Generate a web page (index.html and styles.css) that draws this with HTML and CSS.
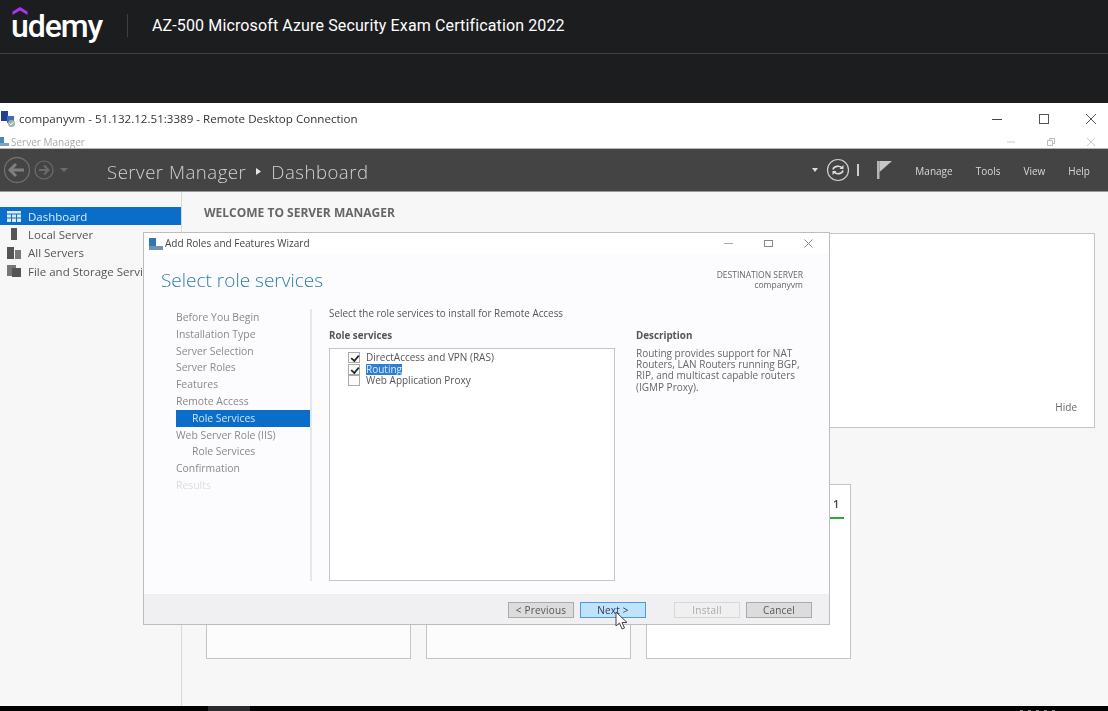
FILE: index.html
```html
<!DOCTYPE html>
<html lang="en">
<head>
<meta charset="utf-8">
<title>AZ-500 Microsoft Azure Security Exam Certification 2022</title>
<link rel="stylesheet" href="styles.css">
</head>
<body>
<header class="topbar">
  <div class="logo">
    <svg class="logo-mark" width="16" height="8" viewBox="0 0 16 8"><path d="M8 0 15.500 4.400V8L8 3.600.5 8V4.400z" fill="#a435f0"/></svg>
    <span class="logo-word">udemy</span>
  </div>
  <span class="topbar-sep"></span>
  <span class="course-title">AZ-500 Microsoft Azure Security Exam Certification 2022</span>
</header>
<div class="band"></div>
<section class="rdp">
  <div class="rdp-title">
    <svg class="rdp-icon" width="15" height="18" viewBox="0 0 15 18"><rect x="0" y="1" width="7" height="10" fill="#1f3f96"/><rect x="6" y="6" width="7" height="7" fill="#3e6cc4"/><circle cx="10.500" cy="13.500" r="3.500" fill="#9fb49f"/><path d="M8.500 13.500 10 15l2.500-3" fill="none" stroke="#fff"/></svg>
    <span class="rdp-text">companyvm - 51.132.12.51:3389 - Remote Desktop Connection</span>
    <div class="win-controls">
      <svg width="12" height="12" viewBox="0 0 12 12"><path d="M1 6.500h10" stroke="#444" stroke-width="1"/></svg>
      <svg width="12" height="12" viewBox="0 0 12 12"><rect x="1.500" y="1.500" width="9" height="9" fill="none" stroke="#555"/></svg>
      <svg width="12" height="12" viewBox="0 0 12 12"><path d="M1 1l10 10M11 1 1 11" stroke="#555"/></svg>
    </div>
  </div>
  <div class="sm-title">
    <svg width="9" height="9" viewBox="0 0 9 9"><rect width="4" height="6" fill="#4a87b8"/><rect y="6" width="9" height="3" fill="#7fa3c0"/></svg>
    <span class="sm-title-text">Server Manager</span>
    <div class="sm-controls">
      <svg width="8" height="8" viewBox="0 0 8 8"><path d="M0 4h8" stroke="#ccc"/></svg>
      <svg width="8" height="8" viewBox="0 0 8 8"><path d="M.5 2.500h5v5h-5zM2.500 2.500v-2h5v5h-2" fill="none" stroke="#bbb"/></svg>
      <svg width="8" height="8" viewBox="0 0 8 8"><path d="M0 0l8 8M8 0 0 8" stroke="#ccc"/></svg>
    </div>
  </div>
  <div class="sm-bar">
    <div class="nav-arrows">
      <svg width="28" height="28" viewBox="0 0 28 28"><circle cx="14" cy="14" r="12.500" fill="none" stroke="#707070" stroke-width="1.300"/><path d="M21 14H8M13 8l-6 6 6 6" fill="none" stroke="#7e7e7e" stroke-width="3"/></svg>
      <svg width="20" height="20" viewBox="0 0 20 20"><circle cx="10" cy="10" r="9" fill="none" stroke="#6c6c6c" stroke-width="1.200"/><path d="M5 10h9M10 5.500 14.500 10 10 14.500" fill="none" stroke="#6c6c6c" stroke-width="2"/></svg>
      <svg width="8" height="4" viewBox="0 0 8 4"><path d="M0 0h8L4 4z" fill="#6c6c6c"/></svg>
    </div>
    <div class="crumbs">
      <span>Server Manager</span>
      <svg width="5" height="7" viewBox="0 0 5 7"><path d="M0 0 5 3.500 0 7z" fill="#e8e8e8"/></svg>
      <span>Dashboard</span>
    </div>
    <div class="sm-tools">
      <svg width="6" height="4" viewBox="0 0 6 4"><path d="M0 0h6L3 4z" fill="#ddd"/></svg>
      <svg class="refresh" width="24" height="24" viewBox="0 0 24 24"><circle cx="12" cy="12" r="10.500" fill="none" stroke="#cfcfcf" stroke-width="1.200"/><path d="M7 11.500a5 4 0 0 1 9-1.500M17 12.500a5 4 0 0 1-9 1.500" fill="none" stroke="#dedede" stroke-width="1.600"/><path d="M17.500 7v4h-4zM6.500 17v-4h4z" fill="#dedede"/></svg>
      <span class="tool-sep"></span>
      <svg class="flag" width="15" height="18" viewBox="0 0 15 18"><path d="M0 0h2.500v18H0z" fill="#b5b5b5"/><path d="M2.500 0H15L2.500 11z" fill="#c8c8c8"/></svg>
      <nav class="sm-menu"><span>Manage</span><span>Tools</span><span>View</span><span>Help</span></nav>
    </div>
  </div>
  <div class="sm-body">
    <aside class="sidebar">
      <div class="side-item active">
        <svg width="14" height="11" viewBox="0 0 14 11"><path d="M0 0h14v11H0z" fill="#dbe9f7"/><path d="M0 3h14M4.500 3v8M9.500 3v8M0 7h14" stroke="#0a6ec8"/></svg>
        <span>Dashboard</span>
      </div>
      <div class="side-item">
        <svg width="14" height="12" viewBox="0 0 14 12"><rect x="4" y="0" width="6" height="12" fill="#555"/></svg>
        <span>Local Server</span>
      </div>
      <div class="side-item">
        <svg width="14" height="12" viewBox="0 0 14 12"><rect x="0" y="0" width="7" height="12" fill="#555"/><rect x="8" y="3" width="6" height="9" fill="#777"/></svg>
        <span>All Servers</span>
      </div>
      <div class="side-item">
        <svg width="14" height="12" viewBox="0 0 14 12"><rect x="0" y="0" width="9" height="11" fill="#777"/><rect x="5" y="3" width="9" height="9" fill="#555"/></svg>
        <span>File and Storage Services</span>
      </div>
    </aside>
    <main class="content">
      <h2 class="welcome-title">WELCOME TO SERVER MANAGER</h2>
      <div class="welcome-panel"><span class="hide-link">Hide</span></div>
      <div class="tiles">
        <div class="tile"></div>
        <div class="tile"></div>
        <div class="tile tile-count"><span class="count">1</span><span class="count-bar"></span></div>
      </div>
    </main>
  </div>
  <div class="dialog">
    <div class="dlg-title">
      <svg width="14" height="12" viewBox="0 0 14 12"><rect width="7" height="8" fill="#2f78b5"/><rect y="8" width="14" height="4" fill="#6f93b3"/></svg>
      <span class="dlg-title-text">Add Roles and Features Wizard</span>
      <div class="dlg-controls">
        <svg width="9" height="9" viewBox="0 0 9 9"><path d="M0 4.500h9" stroke="#aaa"/></svg>
        <svg width="9" height="9" viewBox="0 0 9 9"><rect x=".5" y="1.500" width="8" height="6" fill="none" stroke="#888"/></svg>
        <svg width="9" height="9" viewBox="0 0 9 9"><path d="M.5.500l8 8M8.500.500l-8 8" stroke="#888"/></svg>
      </div>
    </div>
    <div class="dlg-head">
      <h1 class="dlg-heading">Select role services</h1>
      <div class="dest"><div>DESTINATION SERVER</div><div>companyvm</div></div>
    </div>
    <div class="dlg-main">
      <ul class="steps">
        <li>Before You Begin</li>
        <li>Installation Type</li>
        <li>Server Selection</li>
        <li>Server Roles</li>
        <li>Features</li>
        <li>Remote Access</li>
        <li class="sub current">Role Services</li>
        <li>Web Server Role (IIS)</li>
        <li class="sub">Role Services</li>
        <li>Confirmation</li>
        <li class="disabled">Results</li>
      </ul>
      <div class="pane">
        <p class="pane-intro">Select the role services to install for Remote Access</p>
        <div class="pane-cols">
          <div class="roles">
            <div class="sec-label">Role services</div>
            <div class="role-list">
              <div class="role"><span class="check on"></span><span class="role-name">DirectAccess and VPN (RAS)</span></div>
              <div class="role"><span class="check on"></span><span class="role-name selected">Routing</span></div>
              <div class="role"><span class="check"></span><span class="role-name">Web Application Proxy</span></div>
            </div>
          </div>
          <div class="desc">
            <div class="sec-label">Description</div>
            <p class="desc-text">Routing provides support for NAT Routers, LAN Routers running BGP, RIP, and multicast capable routers (IGMP Proxy).</p>
          </div>
        </div>
      </div>
    </div>
    <div class="dlg-foot">
      <span class="btn">&lt; Previous</span>
      <span class="btn hover">Next &gt;<svg class="cursor" width="13" height="19" viewBox="0 0 13 19"><path d="M1 1v14l3.500-3 2.500 6 2.500-1-2.500-5.500H12z" fill="#fff" stroke="#444"/></svg></span>
      <span class="btn off">Install</span>
      <span class="btn">Cancel</span>
    </div>
  </div>
</section>
<div class="bottom"><span class="bottom-thumb"></span><span class="bottom-marks"></span></div>
</body>
</html>
```
FILE: styles.css
```css
* { box-sizing: border-box; }
html, body { margin: 0; height: 711px; overflow: hidden; background: #1c1d1f; }
body { display: flex; flex-direction: column; font-family: "Open Sans", "Noto Sans", sans-serif; color: #555; }
ul, p, h1, h2 { margin: 0; padding: 0; }

.topbar { height: 54px; flex: none; display: flex; align-items: center; padding: 0 0 2px 12px; border-bottom: 1px solid #3e4143; color: #fff; }
.logo { position: relative; width: 91px; height: 44px; }
.logo-mark { position: absolute; left: 0; top: 3px; }
.logo-word { position: absolute; left: -1px; top: 0; font: 500 32px/44px Roboto, sans-serif; letter-spacing: -1.100px; }
.topbar-sep { width: 1px; height: 23px; background: #3e4143; margin-left: 24px; }
.course-title { margin-left: 24px; font: 400 16px Roboto, sans-serif; letter-spacing: .13px; white-space: nowrap; }
.band { height: 49px; flex: none; background: #1c1d1f; }

.rdp { position: relative; flex: none; height: 603px; background: #fff; display: flex; flex-direction: column; filter: blur(.35px); }
.rdp-title { height: 32px; flex: none; display: flex; align-items: center; padding: 0 11px 0 1px; }
.rdp-icon { margin-right: 3px; }
.rdp-text { font: 11.600px "Open Sans", sans-serif; color: #333; padding-bottom: 1px; }
.win-controls { margin-left: auto; display: flex; gap: 35px; }
.sm-title { height: 13px; flex: none; display: flex; align-items: center; gap: 2px; padding-right: 13px; }
.sm-title-text { font-size: 10px; color: #aaa; }
.sm-controls { margin-left: auto; display: flex; gap: 32px; }
.sm-bar { height: 44px; flex: none; background: #444; border-top: 1px solid #b4b4b4; border-bottom: 1px solid #999; display: flex; align-items: center; padding-left: 3px; }
.nav-arrows { display: flex; align-items: center; gap: 3px; width: 104px; }
.nav-arrows svg:last-child { margin-left: 3px; }
.crumbs { display: flex; align-items: center; gap: 10px; font-size: 18.600px; font-weight: 300; letter-spacing: .5px; color: #d2d2d2; padding-top: 2px; }
.sm-tools { margin-left: auto; display: flex; align-items: center; padding-right: 18px; }
.refresh { margin-left: 8px; }
.tool-sep { width: 2px; height: 12px; background: #ccc; margin-left: 7px; }
.flag { margin-left: 18px; }
.sm-menu { display: flex; gap: 23px; margin-left: 23px; padding-top: 1px; font-size: 10px; color: #d8d8d8; }

.sm-body { flex: 1; min-height: 0; display: flex; background: #f7f7f7; }
.sidebar { width: 182px; flex: none; border-right: 1px solid #d8d8d8; padding-top: 15px; }
.side-item { height: 18.300px; display: flex; align-items: center; gap: 7px; padding-left: 7px; font-size: 11.500px; color: #555; white-space: nowrap; overflow: hidden; }
.side-item.active { background: #0a6ec8; color: #dbe9f7; }
.content { flex: 1; min-width: 0; padding: 14px 13px 0 24px; }
.welcome-title { font-size: 12px; font-weight: 700; color: #666; line-height: 14px; margin: 0 0 13px -2px; }
.welcome-panel { height: 195px; background: #fff; border: 1px solid #c4c4c4; position: relative; display: flex; align-items: flex-end; justify-content: flex-end; padding: 0 17px 13px 0; }
.hide-link { font-size: 10px; color: #666; }
.tiles { display: flex; gap: 15px; margin-top: 56px; }
.tile { width: 205px; height: 175px; background: #fcfcfd; border: 1px solid #c4c4c4; }
.tile-count { background: #fff; position: relative; }
.count { position: absolute; left: 186px; top: 11px; font-size: 11px; font-weight: 600; color: #444; }
.count-bar { position: absolute; left: 172px; right: 6px; top: 32px; height: 2px; background: #2ea836; }

.dialog { position: absolute; left: 143px; top: 129px; width: 687px; height: 393px; background: #fcfcfe; border: 1px solid #bdbdbd; display: flex; flex-direction: column; }
.dlg-title { height: 21px; flex: none; display: flex; align-items: center; padding: 0 16px 0 5px; background: #fff; }
.dlg-title-text { font-size: 10px; color: #444; margin-left: 2px; padding-bottom: 1px; }
.dlg-controls { margin-left: auto; display: flex; gap: 31px; }
.dlg-head { height: 53px; flex: none; display: flex; justify-content: space-between; padding: 14px 26px 0 17px; }
.dlg-heading { font-size: 19px; font-weight: 300; color: #2f7ea6; line-height: 24px; }
.dest { font-size: 8.500px; line-height: 9.500px; text-align: right; color: #666; padding-top: 2px; }
.dlg-main { flex: 1; min-height: 0; display: flex; }
.steps { list-style: none; width: 168px; flex: none; margin-top: 2px; padding-left: 32px; height: 272px; border-right: 2px solid #e6e6e8; font-size: 10.400px; color: #8a8a8a; }
.steps li { height: 16.800px; line-height: 16.800px; white-space: nowrap; }
.steps li.sub { padding-left: 16px; }
.steps li.current { background: #0a6ec8; color: #cfe3f6; }
.steps li.disabled { color: #ddd; }
.pane { flex: 1; min-width: 0; padding-left: 17px; }
.pane-intro { font-size: 9.900px; color: #555; line-height: 12px; margin-bottom: 11px; }
.pane-cols { display: flex; gap: 21px; }
.roles { width: 286px; flex: none; }
.sec-label { font-size: 9.800px; font-weight: 700; color: #555; line-height: 12px; margin-bottom: 6px; }
.role-list { height: 233px; background: #fff; border: 1px solid #c6c6c6; padding: 3px 0 0 18px; }
.role { height: 11.400px; display: flex; align-items: center; gap: 6px; font-size: 10px; color: #555; }
.role-name { line-height: 11px; }
.check { width: 12px; height: 11px; flex: none; background: #fbfbfb; border: 1px solid #aaa; position: relative; }
.check.on::after { content: ""; position: absolute; left: 3px; top: 0; width: 4px; height: 7px; border: solid #222; border-width: 0 2px 2px 0; transform: rotate(40deg) scale(.85); }
.selected { background: #2f7fd0; color: #dcebfa; }
.desc { flex: 1; min-width: 0; padding-right: 20px; }
.desc-text { font-size: 10px; line-height: 11.200px; color: #666; }
.dlg-foot { height: 30px; flex: none; background: #f0eff1; display: flex; align-items: center; padding: 0 17px 0 364px; border-top: 1px solid #ececee; }
.btn { position: relative; width: 66px; height: 16px; background: #dcdcdc; border: 1px solid #aaa; font-size: 10px; line-height: 15px; letter-spacing: .2px; text-align: center; color: #555; margin-right: 6px; }
.btn:last-child { margin-right: 0; }
.btn.hover { background: #bfe3fd; border-color: #4a9bd8; color: #335; margin-right: 28px; }
.btn.off { background: #f0f0f0; border-color: #d8d8d8; color: #aaa; }
.cursor { position: absolute; left: 34px; top: 8px; }

.bottom { flex: 1; background: #000; position: relative; }
.bottom-thumb { position: absolute; left: 208px; top: 0; width: 42px; height: 100%; background: #2b2a2d; }
.bottom-marks { position: absolute; left: 1020px; bottom: 0; width: 38px; height: 1px; background: repeating-linear-gradient(90deg, #888 0 3px, transparent 3px 8px); }
```
